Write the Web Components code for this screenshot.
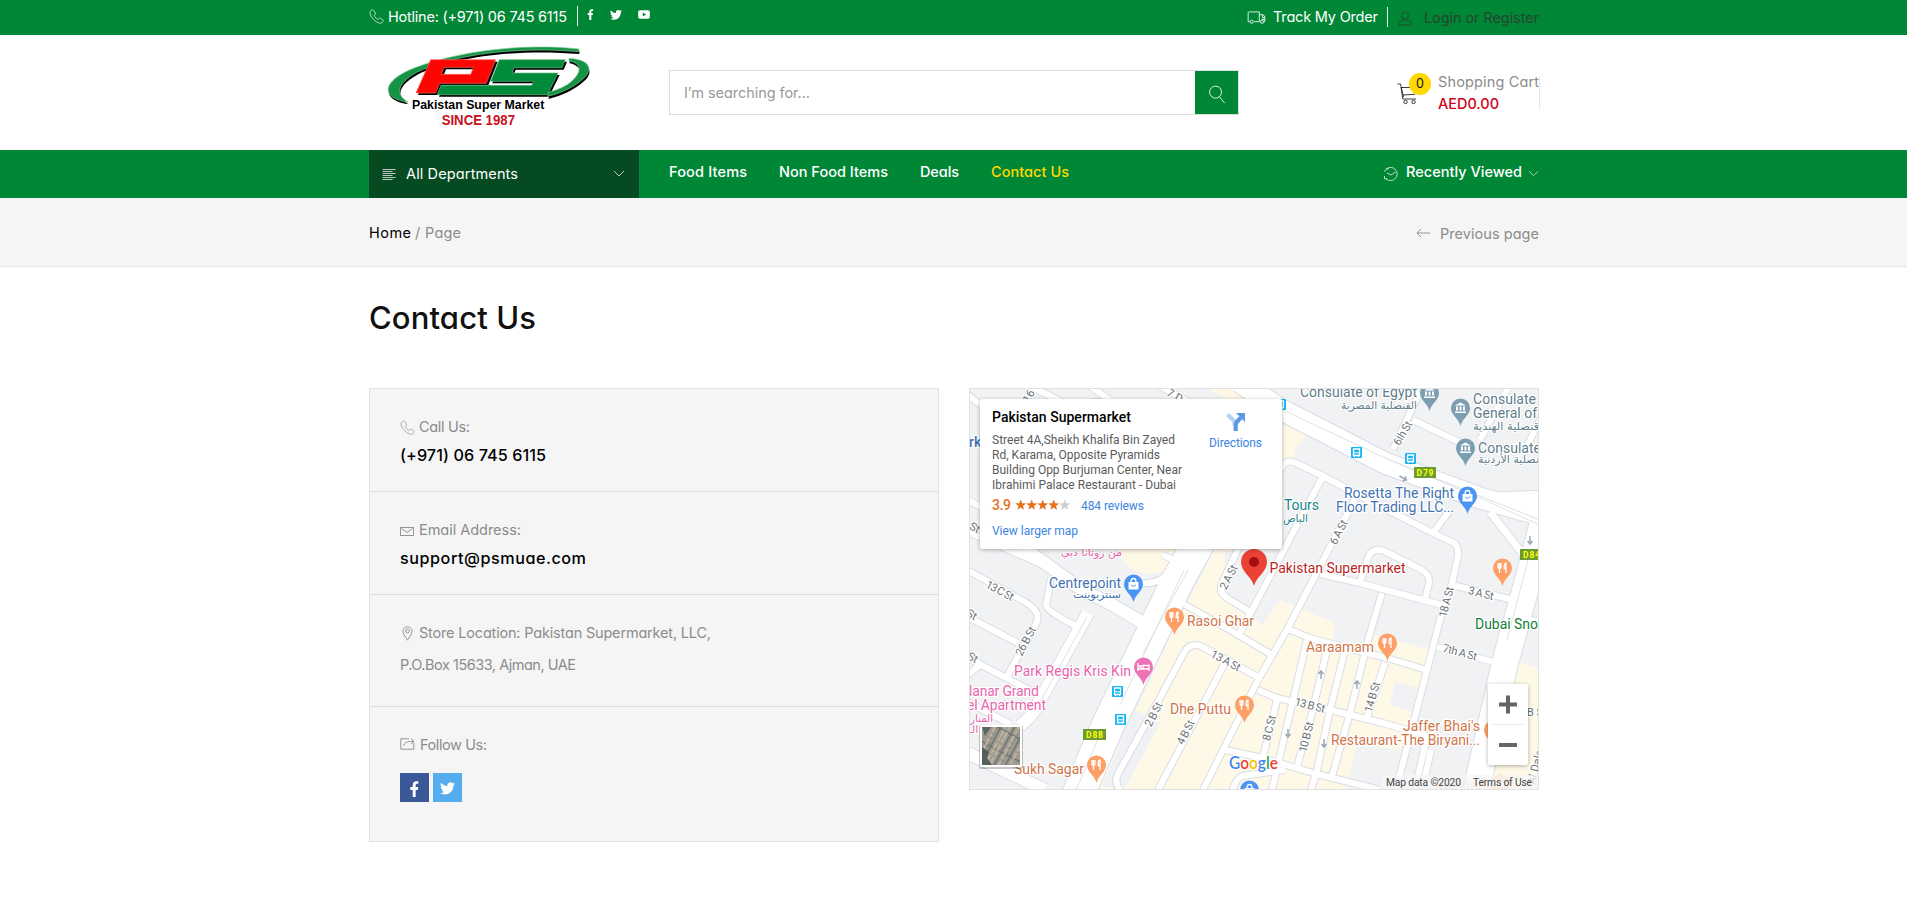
<!DOCTYPE html>
<html lang="en">
<head>
<meta charset="utf-8">
<title>Contact Us - Pakistan Supermarket</title>
<style>
html,body{margin:0;padding:0;background:#fff}
body{font-family:Inter,"Open Sans","Liberation Sans",sans-serif;font-feature-settings:"cv11";font-size:14.500px;color:#8c8c8c;overflow:hidden}
</style>
</head>
<body>
<ps-app></ps-app>
<script>
function define(name, html, setup){
  const t = document.createElement('template');
  t.innerHTML = html;
  customElements.define(name, class extends HTMLElement{
    connectedCallback(){
      if(this.shadowRoot) return;
      this.attachShadow({mode:'open'}).append(t.content.cloneNode(true));
      if(setup) setup(this);
    }
  });
}

/* One line of text tracked to a given width. */
define('fit-text', `<style>:host{display:block;white-space:nowrap;flex:none}span{display:inline-block;letter-spacing:inherit}</style><span><slot></slot></span>`, el=>{
  const w = +el.getAttribute('w'), s = el.shadowRoot.querySelector('span');
  el.style.width = w + 'px';
  const fit = ()=>{
    s.style.letterSpacing = '0px';
    s.style.letterSpacing = (w - s.getBoundingClientRect().width) / (el.textContent.length - 1) + 'px';
  };
  requestAnimationFrame(fit); fit();
});

const ICONS = {
  phone:['0 0 20 20','<path d="M4.2 1.2c-1 .2-2.8 1.8-2.9 3.2-.2 3 2.2 7 4.9 9.700s6 5 9.200 4.900c1.500-.1 3-1.700 3.400-2.900.3-1-.3-1.700-1-2.200l-2.300-1.500c-.8-.5-1.800-.3-2.300.5-.4.7-1 1.200-1.900.7-1.200-.7-3.200-2.600-4-4-.5-.9 0-1.500.7-1.900.8-.5 1-1.500.5-2.300L6.700 2.500c-.6-.9-1.400-1.600-2.500-1.300z"/>'],
  truck:['0 0 20 14','<path d="M2.500 11.500H1V2q0-1 1-1h11v10.500H7M13 4h3.500q1.500 0 2.500 2.500v5h-1.200M16.500 4v3.200H19M14 11.500h.500M15.500 9H19"/><circle cx="4.700" cy="11.600" r="1.700"/><circle cx="16" cy="11.600" r="1.700"/>'],
  user:['0 0 14 16','<circle cx="7" cy="4.800" r="3.800"/><path d="M.8 15v-1.500c0-2.300 1.500-3.700 4-3.700h4.400c2.500 0 4 1.400 4 3.700V15z"/>'],
  menu:['0 0 14 12','<path d="M.5 1.500h13M.5 3.500h10M.5 5.500h13M.5 7.500h10M.5 9.500h13M.5 11.500h10"/>'],
  down:['0 0 12 7','<path d="M1 1l5 5 5-5"/>'],
  history:['0 0 16 16','<path d="M3 3.200A6.600 6.600 0 1 1 3 12.800M3 3.200l3-.6M3 3.200L1.500 5.700M4 7l4 2 4.500-3M1.500 10v2.800H4"/>'],
  arrow:['0 0 14 10','<path d="M1 5h13M5 1L1 5l4 4"/>'],
  search:['0 0 18 20','<circle cx="7.500" cy="7.500" r="6.300"/><path d="M11.500 12.500L17 19"/>'],
  cart:['0 0 20 22','<path d="M.5 1h3l3 13M4 4.500h14M6 12l12-.7M4 4l1.800 12H19" /><circle cx="8.500" cy="19" r="1.700"/><circle cx="16.500" cy="19" r="1.700"/>'],
  mail:['0 0 14 9','<rect x=".5" y=".5" width="13" height="8"/><path d="M1.500 1.500L7 5.500l5.500-4"/>'],
  pin:['0 0 11 15','<path d="M5.500 14.200C4.500 11.500 1 9 1 5.300a4.500 4.500 0 0 1 9 0c0 3.700-3.500 6.200-4.500 8.900z"/><circle cx="5.500" cy="5" r="1.900"/>'],
  share:['0 0 15 12','<path d="M9 .8H.8v10.400h13V5M3.500 8c.5-3 3-4.500 7-4.500h3.500M11 .8L14 3.500 11 6"/>'],
  facebook:['0 0 10 18','<path fill="currentColor" stroke="none" d="M3 18V10H.3V6.800H3V4.500C3 1.800 4.600.3 7 .3c1.200 0 2.300.1 2.300.1v2.700H8c-1.300 0-1.700.8-1.700 1.600v2.100h2.900L8.700 10H6.300v8z"/>'],
  twitter:['0 0 24 20','<path fill="currentColor" stroke="none" d="M24 2.400c-.9.400-1.800.7-2.800.8 1-.6 1.800-1.600 2.200-2.700-1 .6-2 1-3.100 1.200A4.900 4.900 0 0 0 11.900 6.200C7.800 6 4.200 4 1.700.9A4.900 4.900 0 0 0 3.200 7.500c-.8 0-1.600-.2-2.200-.6 0 2.300 1.600 4.400 3.900 4.900-.7.200-1.500.2-2.200.1.600 2 2.400 3.400 4.600 3.400A9.900 9.900 0 0 1 0 17.300 14 14 0 0 0 7.500 19.500c9.100 0 14.300-7.700 14-14.600.9-.7 1.800-1.500 2.500-2.500z"/>'],
  youtube:['0 0 12 9','<path fill="currentColor" stroke="none" fill-rule="evenodd" d="M2 .3h8q1.800 0 1.800 1.800v4.800q0 1.800-1.800 1.800H2Q.2 8.700.2 6.900V2.100Q.2.300 2 .3zM4.800 2.600v3.800L8.100 4.500z"/>']
};
define('ps-icon', `<style>:host{display:block;flex:none;line-height:0}svg{display:block;fill:none;stroke:currentColor;stroke-width:.9}</style><svg></svg>`, el=>{
  const [vb, body] = ICONS[el.getAttribute('name')], s = el.shadowRoot.querySelector('svg');
  s.setAttribute('viewBox', vb);
  s.setAttribute('width', el.getAttribute('w'));
  s.setAttribute('height', el.getAttribute('h'));
  s.innerHTML = body;
});

define('ps-topbar', `<style>
:host{display:block;background:#008736;height:35px;color:#fff}
.in{width:1171px;margin-left:369px;height:35px;display:flex;justify-content:space-between}
.row{display:flex;align-items:flex-start}
fit-text{line-height:20px}
i{width:1px;height:20px;background:#e8f3ec}
.user{color:#25452f}
</style><div class="in">
<div class="row"><ps-icon name="phone" w="15" h="15" style="margin-top:9px"></ps-icon><fit-text w="179" style="margin:7px 0 0 4px">Hotline: (+971) 06 745 6115</fit-text><i style="margin:6px 9px 0 10px"></i>
<ps-icon name="facebook" w="7" h="11" style="margin-top:9px"></ps-icon><ps-icon name="twitter" w="12" h="10" style="margin:10px 0 0 16px"></ps-icon><ps-icon name="youtube" w="12" h="9" style="margin:10px 0 0 16px"></ps-icon></div>
<div class="row"><ps-icon name="truck" w="19" h="13" style="margin-top:11px"></ps-icon><fit-text w="105" style="margin:7px 0 0 7px">Track My Order</fit-text><i style="margin:7px 10px 0 9px"></i>
<ps-icon class="user" name="user" w="14" h="15" style="margin-top:11px"></ps-icon><fit-text class="user" w="115" style="margin:8px 1px 0 12px">Login or Register</fit-text></div>
</div>`);

define('ps-logo', `<style>:host{display:block;width:208px;height:82px}svg{display:block}text{font-family:"Liberation Sans",Arial,sans-serif;font-weight:700}</style>
<svg width="208.300" height="81.700" viewBox="75 135 625 245">
<defs><path id="l" d="M657 147C490 128 290 155 165 203 92 231 66 268 98 291c12 8 26 13 46 15C104 283 112 250 170 217 280 163 470 139 656 155z"/>
<path id="r" d="M627 175c63 4 74 33 43 61-27 25-65 43-107 53l4-13c34-8 62-22 80-45 20-25 10-43-20-49z"/>
<path id="p" fill-rule="evenodd" d="M212 179H407L379 250H239L227 279H168zM252 202L244 223H332L341 202z"/>
<path id="s" d="M418 179H616L606 203H462L456 219H594L562 284H232L243 256H515L522 244H392z"/></defs>
<g fill="#000"><use href="#l" x="2" y="7"/><use href="#r" x="2" y="8"/><use href="#p" x="6" y="6"/><use href="#s" x="5" y="6"/></g>
<use href="#l" fill="#159447" stroke="#7cc58d" stroke-width="2"/><use href="#r" fill="#159447" stroke="#7cc58d" stroke-width="2"/>
<use href="#p" fill="#fd0500" stroke="#ff6a5c" stroke-width="2"/><use href="#s" fill="#008b3a" stroke="#69bd83" stroke-width="2"/>
<text x="156" y="328" font-size="37" textLength="397" lengthAdjust="spacingAndGlyphs">Pakistan Super Market</text>
<text x="245" y="376" font-size="42" fill="#c8101a" textLength="220" lengthAdjust="spacingAndGlyphs">SINCE 1987</text></svg>`);

define('ps-header', `<style>
:host{display:flex;height:115px;align-items:flex-start;padding-left:385px}
.search{box-sizing:border-box;width:570px;height:45px;border:1px solid #ddd;margin:35px 0 0 76px;display:flex;justify-content:space-between;color:#999}
.search fit-text{line-height:43px;margin-left:14px}
.btn{width:43px;height:43px;background:#008736;color:#fff;display:flex;align-items:center;justify-content:center}
.cart{display:flex;margin:41px 0 0 158px;width:142px;height:34px;border-right:1px solid #e8e8e8;color:#222;position:relative}
.badge{position:absolute;left:12px;top:-3px;width:22px;height:22px;border-radius:50%;background:#ffd800;color:#111;text-align:center;line-height:22px;font-size:12.500px}
.t{margin:-5px 0 0 21px}
.t fit-text{line-height:21px}
</style><ps-logo style="margin-top:10px"></ps-logo>
<div class="search"><fit-text w="126">I’m searching for...</fit-text><div class="btn"><ps-icon name="search" w="18" h="19" style="margin-top:3px"></ps-icon></div></div>
<div class="cart"><ps-icon name="cart" w="20" h="22" style="margin-top:7px"></ps-icon><div class="badge">0</div>
<div class="t"><fit-text w="101" style="color:#8c8c8c">Shopping Cart</fit-text><fit-text w="61" style="color:#d0021b;font-weight:500;margin-top:1px">AED0.00</fit-text></div></div>`);

define('ps-nav', `<style>
:host{display:flex;height:48px;background:#008736;color:#fff;padding-left:369px;line-height:44px}
fit-text{font-weight:500}
.dept{width:270px;height:48px;background:#054a20;display:flex;align-items:flex-start;line-height:48px}
.dept fit-text{font-weight:400}
ps-icon{opacity:.8}
</style>
<div class="dept"><ps-icon name="menu" w="14" h="12" style="margin:18px 10px 0 13px"></ps-icon><fit-text w="112">All Departments</fit-text><ps-icon name="down" w="12" h="7" style="margin:20px 0 0 95px"></ps-icon></div>
<fit-text w="78" style="margin-left:30px">Food Items</fit-text><fit-text w="109" style="margin-left:32px">Non Food Items</fit-text><fit-text w="39" style="margin-left:32px">Deals</fit-text><fit-text w="78" style="margin-left:32px;color:#ffd800">Contact Us</fit-text>
<ps-icon name="history" w="16" h="16" style="margin:16px 0 0 314px"></ps-icon><fit-text w="116" style="margin-left:7px">Recently Viewed</fit-text><ps-icon name="down" w="11" h="7" style="margin:20px 0 0 6px"></ps-icon>`);

define('ps-crumbs', `<style>
:host{display:flex;box-sizing:border-box;height:69px;background:#f5f5f5;border-bottom:1px solid #e8e8e8;padding-left:369px;line-height:70px}
</style><fit-text w="42" style="color:#000">Home</fit-text><span style="margin-left:4px;width:10px">/</span><fit-text w="36">Page</fit-text>
<ps-icon name="arrow" w="14" h="10" style="margin:30px 0 0 955px"></ps-icon><fit-text w="99" style="margin:1px 0 0 10px">Previous page</fit-text>`);

define('ps-row', `<style>
:host{display:block;box-sizing:border-box;border-bottom:1px solid #ddd;padding-left:30px}
:host(:last-child){border-bottom:0}
.h{display:flex;align-items:center;height:26px}
.i{width:19px;display:flex}
</style><div class="h"><div class="i"><slot name="icon"></slot></div><slot name="label"></slot></div><slot></slot>`);

define('ps-contact', `<style>
:host{display:block;box-sizing:border-box;width:570px;height:454px;background:#f5f5f5;border:1px solid #e1e1e1}
.v{color:#000;font-size:16.200px;font-weight:500;line-height:28px;padding-top:2px}
.s{display:flex;gap:4px;margin-top:16px}
.s div{width:29px;height:29px;color:#fff;display:flex;align-items:center;justify-content:center}
</style>
<ps-row style="height:103px;padding-top:24px"><ps-icon slot="icon" name="phone" w="15" h="15" style="margin-top:2px"></ps-icon><fit-text slot="label" w="51">Call Us:</fit-text><fit-text class="v" w="146">(+971) 06 745 6115</fit-text></ps-row>
<ps-row style="height:103px;padding-top:24px"><ps-icon slot="icon" name="mail" w="14" h="9" style="margin-top:4px"></ps-icon><fit-text slot="label" w="102">Email Address:</fit-text><fit-text class="v" w="186">support@psmuae.com</fit-text></ps-row>
<ps-row style="height:112px;padding-top:24px"><ps-icon slot="icon" name="pin" w="11" h="15" style="margin:3px 0 0 2px"></ps-icon><fit-text slot="label" w="292">Store Location: Pakistan Supermarket, LLC,</fit-text><fit-text w="176" style="line-height:32px;margin-top:4px">P.O.Box 15633, Ajman, UAE</fit-text></ps-row>
<ps-row style="padding-top:24px"><ps-icon slot="icon" name="share" w="15" h="12" style="margin-top:-1px"></ps-icon><fit-text slot="label" w="67" style="margin-left:1px">Follow Us:</fit-text><div class="s"><div style="background:#3b5998"><ps-icon name="facebook" w="9" h="16" style="margin-top:2px"></ps-icon></div><div style="background:#55acee"><ps-icon name="twitter" w="15" h="13" style="margin-top:2px"></ps-icon></div></div></ps-row>`);

define('map-card', `<style>
:host{display:flex;box-sizing:border-box;width:302px;height:150px;background:#fff;border-radius:2px;box-shadow:0 1px 4px rgba(0,0,0,.3);padding:10px 0 0 12px;font-family:Roboto,sans-serif;font-size:12px;line-height:15px;color:#5b5b5b}
.l{width:217px}.b{color:#3a84df}
.rate{display:flex;align-items:center;height:16px;margin-top:4px}
.d{width:53px;margin:4px 0 0 0;text-align:center}
svg{display:block}
</style><div class="l"><fit-text w="139" style="font-size:14px;line-height:17px;font-weight:500;color:#000;margin-bottom:7px">Pakistan Supermarket</fit-text>
<fit-text w="183">Street 4A,Sheikh Khalifa Bin Zayed</fit-text><fit-text w="168">Rd, Karama, Opposite Pyramids</fit-text><fit-text w="190">Building Opp Burjuman Center, Near</fit-text><fit-text w="184">Ibrahimi Palace Restaurant - Dubai</fit-text>
<div class="rate"><fit-text w="19" style="font-size:14px;font-weight:500;color:#e7711b">3.9</fit-text>
<svg width="56" height="12" viewBox="0 0 56 12" style="margin:0 10px 0 4px"><defs><path id="s" d="M5.700.5l1.400 3.700 4 .2-3.100 2.500 1 3.900-3.300-2.200-3.300 2.200 1-3.900L.3 4.400l4-.2z"/></defs><g fill="#e7711b"><use href="#s"/><use href="#s" x="11"/><use href="#s" x="22"/><use href="#s" x="33"/></g><use href="#s" x="44" fill="#ccc"/></svg>
<fit-text class="b" w="63" style="margin-top:2px">484 reviews</fit-text></div><fit-text class="b" w="86" style="margin-top:11px">View larger map</fit-text></div>
<div class="d"><svg width="20" height="20" viewBox="0 0 20 20" style="margin:-1px auto 4px"><path d="M1.500 2.500l7 7v4" fill="none" stroke="#b5d2f5" stroke-width="4.200"/><path d="M9.700 19v-6q0-2 1.500-3.500L15 5.500" fill="none" stroke="#5e97e4" stroke-width="4.200"/><path d="M10 1h9v9z" fill="#5e97e4"/></svg><fit-text class="b" w="53">Directions</fit-text></div>`);

define('ps-map', `<style>
:host{display:block;position:relative;box-sizing:border-box;width:570px;height:402px;overflow:hidden;font-family:Roboto,"DejaVu Sans",sans-serif}
svg{display:block}
map-card{position:absolute;left:11px;top:11px}
.z{position:absolute;left:519px;top:296px;width:40px;height:81px;background:#fff;border-radius:2px;box-shadow:0 1px 4px rgba(0,0,0,.3)}
.halo text{paint-order:stroke;stroke:#fff;stroke-width:2.500px;stroke-linejoin:round}
.ar text{font-family:"DejaVu Sans",sans-serif;stroke-width:2px}
.frame{position:absolute;inset:0;border:1px solid #e1e1e1;pointer-events:none}
</style>
<svg width="570" height="402" viewBox="969 388 570 402">
<defs>
<path id="pin" d="M0 18C-2 10-9.500 7-9.500 0A9.500 9.500 0 1 1 9.500 0C9.500 7 2 10 0 18z"/>
<g id="food"><use href="#pin" fill="#fd9f66"/><path d="M-4.500-5v4q0 1.500 1.500 1.500V5M-1.500-5v4q0 1.500-1.500 1.500M-3-5v5M3.500 5V-5q-1.800.5-1.800 3V.5h1.800" stroke="#fff" stroke-width="1.300" fill="none"/></g>
<g id="shop"><use href="#pin" fill="#4a94f3"/><path d="M-5-2H5V5.500H-5z" fill="#fff"/><path d="M-2.500-2q0-3.500 2.500-3.500T2.500-2" stroke="#fff" stroke-width="1.300" fill="none"/><path d="M-2.300 1q2.300 3 4.600 0" stroke="#4a94f3" fill="none"/></g>
<g id="gov"><use href="#pin" fill="#7b9eb0"/><path d="M-5.500-2.500L0-5.500l5.500 3zM-5.500 3.500h11V5h-11zM-4.500-1.500h2v4h-2zM-1-1.500h2v4h-2zM2.500-1.500h2v4h-2z" fill="#fff"/></g>
<g id="bus"><rect x="-5.500" y="-5.500" width="11" height="11" rx="1" fill="#12b5f5"/><path d="M-3-3.500h6v6.500h-6z" fill="none" stroke="#fff" stroke-width="1.300"/><path d="M-3 .3h6M-2 3v1.500M2 3v1.500" stroke="#fff"/></g>
<path id="up" d="M0 4V-4M-2.500-1L0-4l2.500 3" stroke="#9aa7b8" stroke-width="1.500" fill="none"/>
<g id="minor"><path d="M1355 499L1330 547 1288 628 1258 680 1203 790M1323 476L1240 633M1270 485L1284 464Q1289 459 1298 464L1323 476 1360 496 1433 533 1454 543Q1459 547 1458 556L1452 583 1442 612 1427 670 1396 790M1360 583L1368 558Q1372 547 1384 551L1422 570Q1430 575 1429 583L1425 600M1320 574L1360 583 1445 606M1382 593L1368 640 1350 713 1331 780M1258 690L1277 698 1330 710 1383 723 1430 737M1288 629L1310 638 1343 647 1387 658 1427 670M1307 640L1293 700 1272 790M1327 650L1312 713 1297 767M1345 650L1330 710 1317 770 1311 790M1385 663L1367 717M1225 750L1263 758 1313 773 1380 790M1277 700L1263 757M1120 790Q1113 782 1119 772L1155 707 1184 653Q1190 641 1203 647L1258 677M1158 790L1225 663M1180 602L1230 630 1272 655M1240 545L1222 583Q1218 592 1227 598L1250 612M1420 392L1393 449M1413 420L1457 441 1470 447M1480 440L1508 388M1524 452L1542 416M1450 510L1433 533M1452 585L1513 600M1437 647L1497 663M969 571L1025 602Q1042 612 1036 624L1005 680M968 617L1018 643M968 658L1035 693M968 675L980 665M968 702L1010 724M1051 578L1046 605Q1046 611 1078 627M1143 583Q1160 585 1173 568M1163 555L1178 562M968 395L990 412M1030 386L1070 406 1110 400M1090 386L1110 400M1160 386L1200 408M1245 386L1270 400M968 445L985 437M968 500L1050 545M968 532L1050 568M1285 770L1242 776Q1235 780 1233 790M1427 738L1417 780M1530 620L1542 622M1431 750L1422 790"/></g>
<g id="mid"><path d="M1020 726Q1034 714 1038 704L1088 613"/><path d="M1020 545L1085 592 1104 600 1150 627M968 753L1045 790"/></g>
</defs>
<rect x="969" y="388" width="570" height="402" fill="#f1f2f4"/>
<g fill="#fef8e7">
<path d="M1217 545H1238L1220 592 1262 625 1280 600 1335 623 1333 640 1370 650 1374 634 1430 650 1410 732 1400 750 1357 744 1346 790H1098L1134 713 1186 605z"/>
<path d="M1280 426L1303 422 1306 436 1294 450 1296 456 1280 472zM1206 388H1250L1290 400V426L1230 400zM1513 660L1540 668V790H1480L1505 730zM1118 545H1178L1163 572Q1126 580 1118 549zM1303 388h12l-2 14z"/></g>
<path d="M1135 710L1160 723 1124 790 1102 786zM1395 682L1417 688 1412 712 1390 705zM1225 552L1245 545 1225 590z" fill="#eff1f4"/>
<g fill="none" stroke-linejoin="round">
<g stroke="#dadde3"><use href="#minor" stroke-width="8"/><use href="#mid" stroke-width="14"/><path d="M1248 450L1200 540 1178 580 1108 725 1076 800" stroke-width="34"/><path d="M1240 382L1278 408 1385 463 1480 498 1545 516M1545 501L1500 503" stroke-width="23"/><path d="M1490 512L1522 553M1538 524L1526 560" stroke-width="9"/><path d="M1545 515L1528 580 1505 663 1474 800" stroke-width="28"/></g>
<g stroke="#fff"><use href="#minor" stroke-width="6"/><use href="#mid" stroke-width="12"/><path d="M1248 450L1200 540 1178 580 1108 725 1076 800" stroke-width="32"/><path d="M1240 382L1278 408 1385 463 1480 498 1545 516M1545 501L1500 503" stroke-width="21"/><path d="M1490 512L1522 553M1538 524L1526 560" stroke-width="7"/><path d="M1545 515L1528 580 1505 663 1474 800" stroke-width="26"/></g>
<path d="M1285 411L1385 458 1480 498 1540 525M1385 458L1540 520M1188 570L1143 653M1184 570L1120 705M1076 790L1100 735M1528 560L1507 640M1087 617L1035 711" stroke="#dde0e5"/>
</g>
<use href="#up" x="1321" y="675"/><use href="#up" x="1357" y="685"/><use href="#up" transform="translate(1288 733) rotate(180)"/><use href="#up" transform="translate(1324 743) rotate(180)"/><use href="#up" transform="translate(1403 478) rotate(120)"/><use href="#up" transform="translate(1530 540) rotate(180)"/>
<g class="halo" font-size="11.300" fill="#6d7378" text-anchor="middle">
<text transform="translate(998 594) rotate(28)" textLength="30">13 C St</text><text transform="translate(1029 643) rotate(-62)" textLength="31">26 B St</text><text transform="translate(1224 664) rotate(28)" textLength="32">13 A St</text>
<text transform="translate(1157 716) rotate(-63)" textLength="26">2 B St</text><text transform="translate(1189 734) rotate(-63)" textLength="26">4 B St</text><text transform="translate(1273 729) rotate(-76)" textLength="26">8 C St</text><text transform="translate(1310 738) rotate(-76)" textLength="31">10 B St</text>
<text transform="translate(1309 709) rotate(14)" textLength="31">13 B St</text><text transform="translate(1376 698) rotate(-74)" textLength="31">14 B St</text><text transform="translate(1450 603) rotate(-76)" textLength="31">18 A St</text><text transform="translate(1480 597) rotate(14)" textLength="26">3 A St</text>
<text transform="translate(1459 656) rotate(15)" textLength="35">7th A St</text><text transform="translate(1342 534) rotate(-62)" textLength="26">6 A St</text><text transform="translate(1406 435) rotate(-60)" textLength="26">6th St</text><text transform="translate(1232 579) rotate(-62)" textLength="26">2 A St</text>
<text transform="translate(973 531) rotate(28)">St</text><text transform="translate(971 661) rotate(28)">St</text><text transform="translate(970 618) rotate(28)">St</text><text transform="translate(1032 398) rotate(-60)">16</text><text transform="translate(1173 399) rotate(28)">7 D</text><text transform="translate(1535 716)">B S</text><text transform="translate(1539 768) rotate(-75)">Al Dala</text></g>
<g>
<use href="#shop" x="1133.500" y="584"/><use href="#food" x="1174.500" y="617"/><use href="#food" x="1244.500" y="705"/><use href="#food" x="1096.500" y="765"/><use href="#food" x="1387.500" y="643"/><use href="#food" x="1502.500" y="568"/><use href="#food" x="1493.500" y="730"/><use href="#food" x="1500" y="784" opacity=".5"/>
<use href="#shop" x="1467.500" y="496"/><use href="#shop" x="1249.500" y="790"/><use href="#gov" x="1429.500" y="393"/><use href="#gov" x="1460.500" y="408"/><use href="#gov" x="1465.500" y="448"/>
<g transform="translate(1143.500 667)"><use href="#pin" fill="#ee73b5"/><path d="M-5.500-4V4M-5.500 2H5.500V4M5.500 2V-1.500H-.5V2" stroke="#fff" stroke-width="1.400" fill="none"/><circle cx="-3" cy="-.5" r="1.400" fill="#fff"/></g>
<use href="#bus" x="1117.500" y="691.500"/><use href="#bus" x="1120.500" y="719.500"/><use href="#bus" x="1356.500" y="452.500"/><use href="#bus" x="1410.500" y="458.500"/><use href="#bus" x="1280.500" y="404.500"/>
<path d="M1254 586C1252 577 1241 572 1241 562A13 13 0 0 1 1267 562C1267 572 1256 577 1254 586z" fill="#ea4335"/><circle cx="1254" cy="562" r="5" fill="#a50e0e"/></g>
<g font-size="8.500" font-weight="700" fill="#ff0" text-anchor="middle"><path d="M1414 467h22v11h-22zM1520 549h20v11h-20zM1083 729h23v11h-23z" fill="#6c9a35"/><text x="1425" y="476" textLength="17">D79</text><text x="1531.500" y="558" textLength="17">D84</text><text x="1094.500" y="737.500" textLength="17">D88</text></g>
<g class="halo" font-size="14">
<text x="1269.500" y="573" textLength="136" fill="#b9241c">Pakistan Supermarket</text>
<g fill="#d07549"><text x="1187" y="626" textLength="67">Rasoi Ghar</text><text x="1306" y="652" textLength="68">Aaraamam</text><text x="1170" y="714" textLength="61">Dhe Puttu</text><text x="1014" y="774" textLength="70">Sukh Sagar</text><text x="1403" y="731" textLength="77">Jaffer Bhai's</text><text x="1331" y="745" textLength="149">Restaurant-The Biryani...</text><text x="1435" y="791" textLength="54" opacity=".4">Rajdhani</text></g>
<g fill="#e863ab"><text x="1014" y="676" textLength="117">Park Regis Kris Kin</text><text x="969" y="696" textLength="70">lanar Grand</text><text x="967" y="710" textLength="79">el Apartment</text></g>
<g fill="#4372b3"><text x="1049" y="588" textLength="72">Centrepoint</text><text x="1344" y="498" textLength="110">Rosetta The Right</text><text x="1336" y="512" textLength="118">Floor Trading LLC...</text><text x="969" y="447" font-weight="500">rk</text></g>
<g fill="#607d8b"><text x="1300" y="397" textLength="117">Consulate of Egypt</text><text x="1473" y="404" textLength="63">Consulate</text><text x="1473" y="418" textLength="64">General of</text><text x="1478" y="453" textLength="63">Consulate</text></g>
<text x="1284" y="510" textLength="35" fill="#168489">Tours</text><text x="1475" y="629" textLength="63" fill="#138039">Dubai Sno</text>
</g>
<g class="halo ar" font-size="10.500"><g fill="#607d8b"><text x="1341" y="409" textLength="76" lengthAdjust="spacingAndGlyphs">القنصلية المصرية</text><text x="1473" y="430" textLength="66" lengthAdjust="spacingAndGlyphs">قنصلية الهندية</text><text x="1478" y="463" textLength="61" lengthAdjust="spacingAndGlyphs">نصلية الأردنية</text></g><text x="1283" y="522" textLength="25" lengthAdjust="spacingAndGlyphs" fill="#168489">الباص</text><text x="1061" y="556" textLength="61" lengthAdjust="spacingAndGlyphs" fill="#e863ab">من روتانا دبي</text><text x="1073" y="598" textLength="48" lengthAdjust="spacingAndGlyphs" fill="#4372b3">سنتربوينت</text><text x="970" y="722" textLength="23" lengthAdjust="spacingAndGlyphs" fill="#e863ab">المنار</text><text x="969" y="733" fill="#e863ab">الـ</text></g>
<g font-size="16.500" font-weight="600" style="paint-order:stroke" stroke="#fff" stroke-width="2"><text x="1229" y="768.500" textLength="49" lengthAdjust="spacingAndGlyphs" font-family="Lato"><tspan fill="#4285f4">G</tspan><tspan fill="#ea4335">o</tspan><tspan fill="#fbbc05">o</tspan><tspan fill="#4285f4">g</tspan><tspan fill="#34a853">l</tspan><tspan fill="#ea4335">e</tspan></text></g>
<path d="M1382 775h157v15h-157z" fill="#f5f5f5" fill-opacity=".75"/>
<g font-size="10.300" fill="#444"><text x="1386" y="786" textLength="75">Map data ©2020</text><text x="1473" y="786" textLength="59">Terms of Use</text></g>
<g><rect x="979" y="725" width="44" height="44" rx="2" fill="#000" opacity=".22"/><rect x="980" y="725" width="42" height="42" rx="1" fill="#fff"/><svg x="982" y="727" width="38" height="38" viewBox="0 0 38 38"><rect width="38" height="38" fill="#9d9a92"/><g transform="rotate(28 19 19)"><path d="M10-10V50M22-10V50M32-10V50M-10 4H50M-10 24H50" stroke="#6f7775" stroke-width="1.600"/><path d="M5-10V50M14-10V50M18-10V50M26-10V50M36-10V50" stroke="#bdb09b" stroke-width="2.500" stroke-dasharray="7 1 4 2"/><path d="M7-10V50M28-10V50" stroke="#7d8580" stroke-dasharray="3 2"/></g><path d="M0 20l7 5-2 6 5 7H0z" fill="#53605b"/><path d="M0 0h9L3 9z" fill="#5b685f"/></svg></g>
</svg>
<map-card></map-card>
<div class="z"><svg width="40" height="81"><path d="M11 20.500h18M20 11.500v18M11 61h18" stroke="#666" stroke-width="4"/><path d="M5 40.500h30" stroke="#e6e6e6"/></svg></div>
<div class="frame"></div>`);

define('ps-app', `<style>
:host{display:block;width:1907px;height:917px;background:#fff}
h1{margin:0;padding:30px 0 0 369px;height:91px;font-size:31px;line-height:41px;font-weight:500;color:#111}
main{display:flex;gap:30px;padding-left:369px}
</style><ps-topbar></ps-topbar><ps-header></ps-header><ps-nav></ps-nav><ps-crumbs></ps-crumbs><h1><fit-text w="167">Contact Us</fit-text></h1><main><ps-contact></ps-contact><ps-map></ps-map></main>`);
</script>
</body>
</html>
